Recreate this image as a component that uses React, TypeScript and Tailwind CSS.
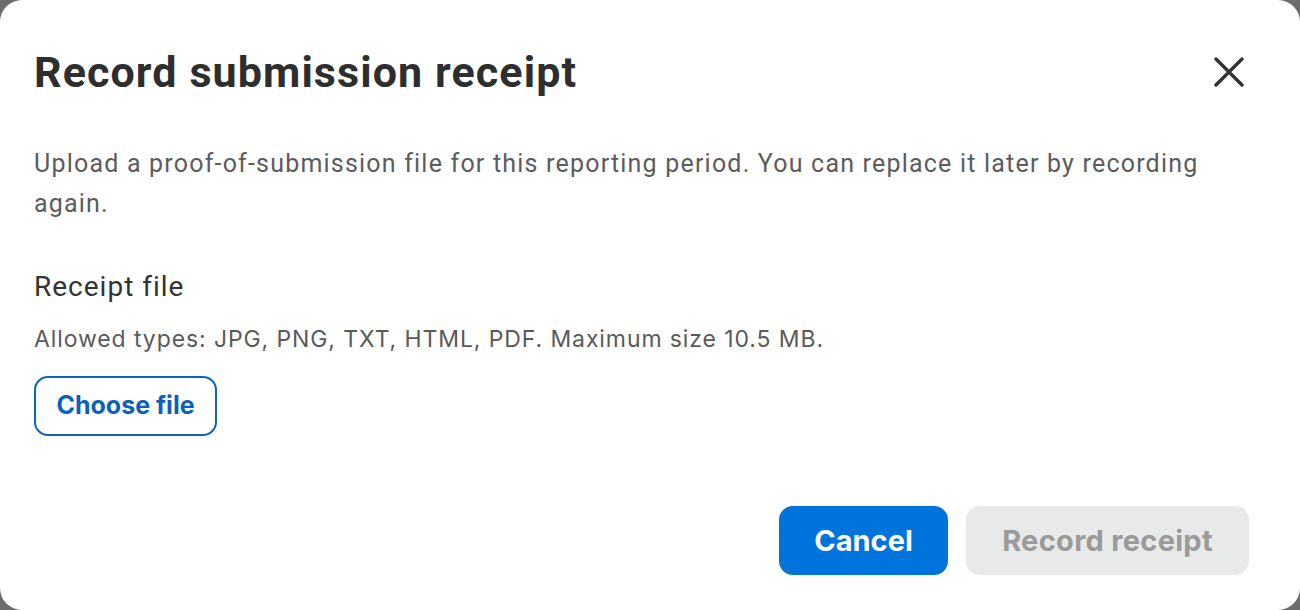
import React from "react";

export default function App() {
  return (
    <div className="w-[1300px] h-[610px] bg-[#6c6c6c]">
      <div className="w-full h-full bg-white rounded-[22px] pt-[50px] pl-[34px] pr-[51px] flex flex-col" style={{ fontFamily: "Roboto, 'Noto Sans', sans-serif" }}>
        <div className="flex items-center justify-between h-[44px]">
          <h1 className="text-[43px] leading-[44px] font-bold text-[#2e2e2e] tracking-[1.1px]" style={{ fontFamily: "Roboto, sans-serif" }}>
            Record submission receipt
          </h1>
          <button className="w-[40px] h-[40px] flex items-center justify-center">
            <svg width="30" height="30" viewBox="0 0 30 30" fill="none">
              <path d="M2 2 L28 28 M28 2 L2 28" stroke="#333" strokeWidth="3.4" strokeLinecap="round" />
            </svg>
          </button>
        </div>
        <p className="mt-[50px] text-[25px] leading-[40px] text-[#5c5c5c] tracking-[1.2px]">
          Upload a proof-of-submission file for this reporting period. You can replace it later by recording again.
        </p>
        <div className="mt-[47px] text-[28px] leading-[32px] text-[#333] tracking-[1px]">Receipt file</div>
        <div className="mt-[22px] text-[23px] leading-[28px] text-[#5a5a5a] tracking-[0.9px]" style={{ fontFamily: "Inter, sans-serif" }}>
          Allowed types: JPG, PNG, TXT, HTML, PDF. Maximum size 10.5 MB.
        </div>
        <div className="mt-[23px]">
          <button className="h-[60px] w-[183px] border-2 border-[#0b64c0] rounded-[14px] text-[#0b60bb] text-[25px] font-bold" style={{ fontFamily: "Inter, sans-serif" }}>
            Choose file
          </button>
        </div>
        <div className="mt-[70px] flex justify-end gap-[18px]">
          <button className="h-[69px] w-[169px] rounded-[14px] bg-[#0073dd] text-white text-[29px] font-bold" style={{ fontFamily: "Inter, sans-serif" }}>
            Cancel
          </button>
          <button className="h-[69px] w-[283px] rounded-[14px] bg-[#e8e9e9] text-[#9a9a9a] text-[29px] font-bold tracking-[0.3px]" style={{ fontFamily: "Inter, sans-serif" }}>
            Record receipt
          </button>
        </div>
      </div>
    </div>
  );
}
